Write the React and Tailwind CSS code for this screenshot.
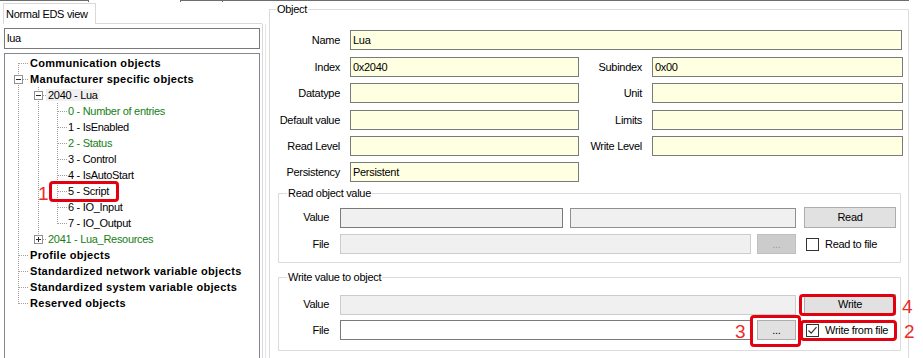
import React from "react";

const tree = [
  { label: "Communication objects", level: 0, bold: true },
  { label: "Manufacturer specific objects", level: 0, bold: true },
  { label: "2040 - Lua", level: 1, selected: true },
  { label: "0 - Number of entries", level: 2, green: true },
  { label: "1 - IsEnabled", level: 2 },
  { label: "2 - Status", level: 2, green: true },
  { label: "3 - Control", level: 2 },
  { label: "4 - IsAutoStart", level: 2 },
  { label: "5 - Script", level: 2 },
  { label: "6 - IO_Input", level: 2 },
  { label: "7 - IO_Output", level: 2 },
  { label: "2041 - Lua_Resources", level: 1, green: true },
  { label: "Profile objects", level: 0, bold: true },
  { label: "Standardized network variable objects", level: 0, bold: true },
  { label: "Standardized system variable objects", level: 0, bold: true },
  { label: "Reserved objects", level: 0, bold: true },
];

const indent = { 0: "pl-[25px]", 1: "pl-[41px]", 2: "pl-[63px]" };

const cy = (i) => 9 + 16 * i;

const ExpandBox = ({ cx, row, open }) => {
  const y = cy(row);
  return (
    <g>
      <rect x={cx - 3.5} y={y - 3.5} width={8} height={8} fill="#fff" stroke="#919191" />
      <line x1={cx - 2} x2={cx + 3} y1={y + 0.5} y2={y + 0.5} stroke="#2a2a2a" />
      {!open && <line x1={cx + 0.5} x2={cx + 0.5} y1={y - 2} y2={y + 3} stroke="#2a2a2a" />}
    </g>
  );
};

const TreeLines = () => {
  const dot = { stroke: "#a0a0a0", strokeDasharray: "1 1", shapeRendering: "crispEdges" };
  return (
    <svg className="absolute left-0 top-0" width="256" height="320">
      <line x1="13.5" x2="13.5" y1="9" y2="250" {...dot} />
      {[0, 1, 12, 13, 14, 15].map((r) => (
        <line key={r} x1="14" x2="24" y1={cy(r) + 0.5} y2={cy(r) + 0.5} {...dot} />
      ))}
      <line x1="33.5" x2="33.5" y1="33" y2="186" {...dot} />
      {[2, 11].map((r) => (
        <line key={r} x1="38" x2="42" y1={cy(r) + 0.5} y2={cy(r) + 0.5} {...dot} />
      ))}
      <line x1="52.5" x2="52.5" y1="49" y2="170" {...dot} />
      {[3, 4, 5, 6, 7, 8, 9, 10].map((r) => (
        <line key={r} x1="53" x2="62" y1={cy(r) + 0.5} y2={cy(r) + 0.5} {...dot} />
      ))}
      <ExpandBox cx={13} row={1} open />
      <ExpandBox cx={33} row={2} open />
      <ExpandBox cx={33} row={11} />
    </svg>
  );
};

const Yellow = ({ className, value }) => (
  <div className={`h-[20px] border border-[#7a7a7a] bg-[#ffffe1] px-[2px] leading-[18px] ${className}`}>
    {value}
  </div>
);

const Check = ({ checked }) => (
  <div className="w-[13px] h-[13px] border border-[#333333] bg-white flex items-center justify-center">
    {checked && (
      <svg width="11" height="11" viewBox="0 0 11 11">
        <path d="M1.5 5.5 L4.2 8.2 L9.5 2.2" fill="none" stroke="#333333" strokeWidth="1.2" />
      </svg>
    )}
  </div>
);

export default function App() {
  return (
    <div className="relative w-[923px] h-[358px] overflow-hidden bg-white text-[11px] leading-[13px] tracking-[-0.3px] text-black font-['Liberation_Sans',Arial,sans-serif]">
      {/* outer tab strip edge */}
      <div className="flex h-[2px]">
        <div className="w-[89px] border-t border-r border-[#6d6d6d]" />
        <div className="w-[91px]" />
        <div className="w-[43px] border-t border-l border-r border-[#6d6d6d]" />
        <div className="w-[686px] border-t border-[#6d6d6d]" />
      </div>

      <div className="flex h-[356px]">
        {/* left side */}
        <div className="w-[262px] flex flex-col">
          <div className="mt-[1px] flex h-[21px]">
            <div className="ml-[3px] w-[93px] border border-b-0 border-[#d9d9d9] pl-[2px] leading-[20px]">
              Normal EDS view
            </div>
            <div className="flex-1 border-b border-[#d9d9d9]" />
          </div>
          <div className="mt-[4px] ml-[4px] w-[256px] h-[21px] border border-[#7a7a7a] pl-[2px] leading-[19px]">
            lua
          </div>
          <div className="relative mt-[4px] ml-[4px] w-[256px] h-[320px] shrink-0 border border-[#828790] pt-[1px]">
            <TreeLines />
            {tree.map((item) => (
              <div key={item.label} className={`relative h-[16px] leading-[16px] whitespace-nowrap ${indent[item.level]}`}>
                <span
                  className={`${item.level === 1 ? "px-[2px]" : ""} ${item.selected ? "bg-[#f0f0f0]" : ""} ${
                    item.bold ? "font-bold tracking-[0.3px]" : ""
                  } ${item.green ? "text-[#168016]" : "text-black"}`}
                >
                  {item.label}
                </span>
              </div>
            ))}
          </div>
        </div>

        {/* splitter */}
        <div className="mt-[22px] w-[4px] border-l border-r border-l-[#d9d9d9] border-r-[#e6e6e6]" />

        {/* right side */}
        <div className="flex-1 pt-[1px]">
          <fieldset className="ml-[3px] w-[640px] h-[380px] border border-[#dcdcdc]">
            <legend className="ml-[6px] px-[1px]">Object</legend>

            <div className="mt-[14px] flex h-[20px] items-center">
              <div className="w-[70px] text-right">Name</div>
              <Yellow className="ml-[10px] w-[552px]" value="Lua" />
            </div>
            <div className="mt-[7px] flex h-[20px] items-center">
              <div className="w-[70px] text-right">Index</div>
              <Yellow className="ml-[10px] w-[229px]" value="0x2040" />
              <div className="w-[63px] text-right">Subindex</div>
              <Yellow className="ml-[10px] w-[251px]" value="0x00" />
            </div>
            <div className="mt-[6px] flex h-[20px] items-center">
              <div className="w-[70px] text-right">Datatype</div>
              <Yellow className="ml-[10px] w-[229px]" />
              <div className="w-[63px] text-right">Unit</div>
              <Yellow className="ml-[10px] w-[251px]" />
            </div>
            <div className="mt-[7px] flex h-[20px] items-center">
              <div className="w-[70px] text-right whitespace-nowrap">Default value</div>
              <Yellow className="ml-[10px] w-[229px]" />
              <div className="w-[63px] text-right">Limits</div>
              <Yellow className="ml-[10px] w-[251px]" />
            </div>
            <div className="mt-[6px] flex h-[20px] items-center">
              <div className="w-[70px] text-right">Read Level</div>
              <Yellow className="ml-[10px] w-[229px]" />
              <div className="w-[63px] text-right whitespace-nowrap">Write Level</div>
              <Yellow className="ml-[10px] w-[251px]" />
            </div>
            <div className="mt-[6px] flex h-[20px] items-center">
              <div className="w-[70px] text-right">Persistency</div>
              <Yellow className="ml-[10px] w-[229px]" value="Persistent" />
            </div>

            <fieldset className="mt-[5px] ml-[8px] w-[623px] border border-[#dcdcdc] pb-[8px]">
              <legend className="ml-[8px] px-[1px]">Read object value</legend>
              <div className="mt-[7px] flex h-[21px] items-end">
                <div className="w-[50px] text-right self-center">Value</div>
                <div className="ml-[11px] w-[223px] h-[20px] border border-[#7a7a7a] bg-[#f0f0f0]" />
                <div className="ml-[7px] w-[226px] h-[20px] border border-[#8f8f8f] bg-[#f0f0f0]" />
                <div className="ml-[8px] w-[92px] h-[21px] border border-[#adadad] bg-[#e1e1e1] flex items-center justify-center">
                  Read
                </div>
              </div>
              <div className="mt-[6px] flex h-[20px] items-center">
                <div className="w-[50px] text-right">File</div>
                <div className="ml-[11px] w-[411px] h-[20px] border border-[#cccccc] bg-[#f0f0f0]" />
                <div className="ml-[6px] w-[39px] h-[20px] border border-[#bfbfbf] bg-[#cccccc] text-[#9a9a9a] flex items-center justify-center">
                  ...
                </div>
                <div className="ml-[10px]">
                  <Check />
                </div>
                <div className="ml-[6px]">Read to file</div>
              </div>
            </fieldset>

            <fieldset className="mt-[8px] ml-[8px] w-[623px] border border-[#dcdcdc] pb-[10px]">
              <legend className="ml-[8px] px-[1px]">Write value to object</legend>
              <div className="mt-[10px] flex h-[21px] items-end">
                <div className="w-[50px] text-right self-center">Value</div>
                <div className="ml-[11px] w-[456px] h-[20px] border border-[#cccccc] bg-[#f0f0f0]" />
                <div className="ml-[8px] w-[92px] h-[21px] border border-[#adadad] bg-[#e1e1e1] flex items-center justify-center">
                  Write
                </div>
              </div>
              <div className="mt-[5px] flex h-[20px] items-center">
                <div className="w-[50px] text-right">File</div>
                <div className="ml-[11px] w-[411px] h-[20px] border border-[#7a7a7a] bg-white" />
                <div className="ml-[6px] w-[39px] h-[20px] border border-[#adadad] bg-[#e1e1e1] flex items-center justify-center">
                  ...
                </div>
                <div className="ml-[10px]">
                  <Check checked />
                </div>
                <div className="ml-[6px]">Write from file</div>
              </div>
            </fieldset>
          </fieldset>
        </div>
      </div>

      {/* red annotations */}
      <div className="absolute left-[49px] top-[181px] w-[70px] h-[21px] rounded-[4px] border-[3px] border-[#e3000f]" />
      <span className="absolute left-[38px] top-[184px] text-[19px] leading-[19px] tracking-normal text-[#ee2b2b]">1</span>
      <div className="absolute left-[799px] top-[294px] w-[97px] h-[22px] rounded-[4px] border-[3px] border-[#e3000f]" />
      <span className="absolute left-[902px] top-[297px] text-[19px] leading-[19px] tracking-normal text-[#ee2b2b]">4</span>
      <div className="absolute left-[750px] top-[315px] w-[51px] h-[32px] rounded-[4px] border-[3px] border-[#e3000f]" />
      <span className="absolute left-[735px] top-[322px] text-[19px] leading-[19px] tracking-normal text-[#ee2b2b]">3</span>
      <div className="absolute left-[800px] top-[320px] w-[97px] h-[21px] rounded-[4px] border-[3px] border-[#e3000f]" />
      <span className="absolute left-[904px] top-[322px] text-[19px] leading-[19px] tracking-normal text-[#ee2b2b]">2</span>
    </div>
  );
}
